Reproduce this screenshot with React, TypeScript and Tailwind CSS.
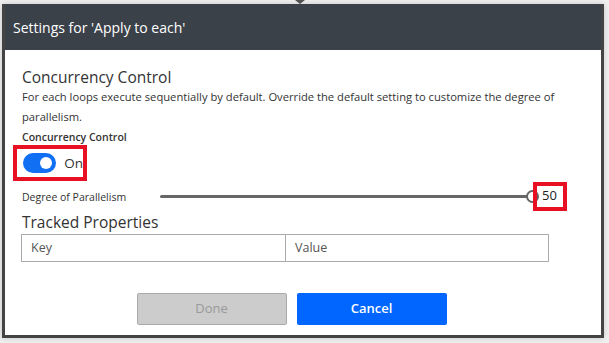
import React from 'react';

const font = { fontFamily: '"Open Sans", "Noto Sans", sans-serif' };

const App: React.FC = () => {
  return (
    <div className="w-[609px] h-[343px] bg-[#f0f0f0] relative overflow-hidden" style={font}>
      {/* little pointer above the dialog */}
      <div className="absolute left-[295px] top-0 w-0 h-0 border-l-[5px] border-r-[5px] border-t-[4px] border-l-transparent border-r-transparent border-t-[#555]" />

      <div className="absolute left-[2px] top-[4px] w-[602px] h-[334px] bg-white border-l-[3px] border-r-[3px] border-b-[3px] border-[#444] shadow-[0_0_6px_rgba(0,0,0,0.18)] flex flex-col">
        <div className="h-[46px] shrink-0 bg-[#3b4149] flex items-center pl-[8px] text-white text-[14px]">
          Settings for 'Apply to each'
        </div>

        <div className="pl-[17px] pr-[14px] flex flex-col text-[#333]">
          <h2 className="mt-[17px] text-[15.5px] leading-[20px] text-[#333]">Concurrency Control</h2>
          <p className="text-[11.2px] leading-[20px] text-[#333] w-[575px]">
            For each loops execute sequentially by default. Override the default setting to customize the degree of parallelism.
          </p>
          <div className="text-[10.5px] leading-[20px] font-semibold text-[#333]">Concurrency Control</div>

          <div className="-ml-[9px] mt-[-2px] w-[74px] h-[36px] border-[4px] border-[#e81123] flex items-center pl-[6px] gap-[8px]">
            <div className="w-[40px] h-[20px] rounded-full bg-[#106ff3] flex items-center justify-end pr-[4px]">
              <div className="w-[12px] h-[12px] rounded-full bg-white" />
            </div>
            <span className="text-[13.5px] text-[#333]">On</span>
          </div>

          <div className="h-[30px] flex items-center">
            <span className="w-[138px] text-[10.5px] text-[#333] pt-[4px]">Degree of Parallelism</span>
            <div className="flex items-center h-full">
              <div className="w-[372px] h-[3px] bg-[#666] rounded-full" />
              <div className="w-[13px] h-[13px] rounded-full bg-white border-[2px] border-[#666] -ml-[6px] shrink-0" />
              <div className="relative -ml-[6px] w-[34px] h-[29px] border-[4px] border-[#e81123] flex items-center pl-[5px] text-[13px] text-[#222]">
                50
              </div>
            </div>
          </div>

          <h2 className="text-[15.5px] leading-[20px] text-[#333] mt-[1px]">Tracked Properties</h2>
          <div className="-ml-[1px] mt-[2px] w-[528px] h-[28px] flex border border-[#aaa]">
            <div className="w-[264px] border-r border-[#aaa] flex items-center pl-[9px] text-[12.5px] text-[#555]">Key</div>
            <div className="flex-1 flex items-center pl-[9px] text-[12.5px] text-[#555]">Value</div>
          </div>

          <div className="mt-[31px] flex justify-center gap-[10px] pr-[26px]">
            <button className="w-[150px] h-[32px] bg-[#cccccc] border border-[#aaa] rounded-[2px] text-[13px] text-[#999]">
              Done
            </button>
            <button className="w-[150px] h-[32px] bg-[#0066ff] rounded-[2px] text-[13px] font-semibold text-white">
              Cancel
            </button>
          </div>
        </div>
      </div>
    </div>
  );
};

export default App;
